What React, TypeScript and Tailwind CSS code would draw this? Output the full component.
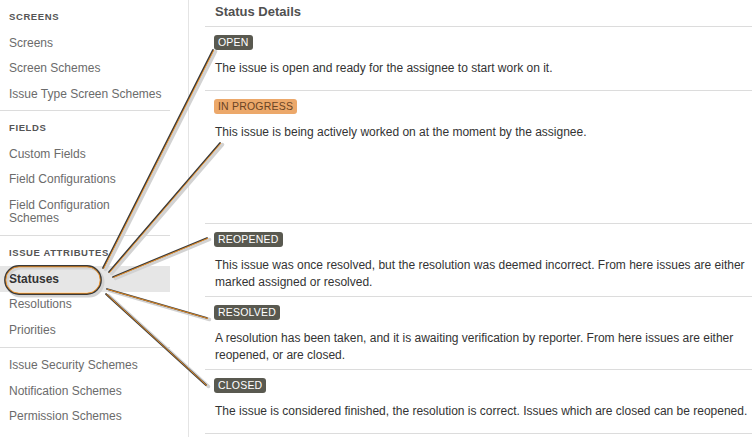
import React from "react";

const font = { fontFamily: '"Liberation Sans", Arial, sans-serif' };

type Item = { label: string; active?: boolean; twoLine?: boolean };
type Section = { heading?: string; items: Item[] };

const sections: Section[] = [
  { heading: "SCREENS", items: [{ label: "Screens" }, { label: "Screen Schemes" }, { label: "Issue Type Screen Schemes" }] },
  {
    heading: "FIELDS",
    items: [{ label: "Custom Fields" }, { label: "Field Configurations" }, { label: "Field Configuration Schemes", twoLine: true }],
  },
  { heading: "ISSUE ATTRIBUTES", items: [{ label: "Statuses", active: true }, { label: "Resolutions" }, { label: "Priorities" }] },
  { items: [{ label: "Issue Security Schemes" }, { label: "Notification Schemes" }, { label: "Permission Schemes" }] },
];

type Status = { name: string; orange?: boolean; text: string; h: string };
const statuses: Status[] = [
  { name: "OPEN", text: "The issue is open and ready for the assignee to start work on it.", h: "h-[64px]" },
  { name: "IN PROGRESS", orange: true, text: "This issue is being actively worked on at the moment by the assignee.", h: "h-[133px]" },
  {
    name: "REOPENED",
    text: "This issue was once resolved, but the resolution was deemed incorrect. From here issues are either marked assigned or resolved.",
    h: "h-[73px]",
  },
  {
    name: "RESOLVED",
    text: "A resolution has been taken, and it is awaiting verification by reporter. From here issues are either reopened, or are closed.",
    h: "h-[73px]",
  },
  {
    name: "CLOSED",
    text: "The issue is considered finished, the resolution is correct. Issues which are closed can be reopened.",
    h: "h-[64px]",
  },
];

function Line({ x1, y1, x2, y2 }: { x1: number; y1: number; x2: number; y2: number }) {
  return (
    <g>
      <line x1={x1 + 2.5} y1={y1 + 1.5} x2={x2 + 2.5} y2={y2 + 1.5} stroke="#d2d2d2" strokeWidth={3.5} strokeLinecap="round" />
      <line x1={x1} y1={y1} x2={x2} y2={y2} stroke="#3a3a3a" strokeWidth={1.8} strokeLinecap="round" />
      <line x1={x1 + 0.7} y1={y1 + 0.4} x2={x2 + 0.7} y2={y2 + 0.4} stroke="#f0901f" strokeWidth={0.9} strokeLinecap="round" />
    </g>
  );
}

export default function App() {
  return (
    <div className="relative w-[752px] h-[437px] bg-white overflow-hidden flex" style={font}>
      {/* Sidebar */}
      <div className="w-[189px] shrink-0 border-r border-[#e4e4e4] pr-[18px]">
        {sections.map((s, i) => (
          <div
            key={i}
            className={`pt-[5px] ${i === 0 ? "pb-[3.5px]" : "pb-[4px]"} ${
              i < sections.length - 1 ? "border-b border-[#dcdcdc]" : ""
            }`}
          >
            {s.heading && (
              <div className="h-[25px] flex items-center pl-[9px] text-[9.5px] font-bold tracking-[0.6px] text-[#555]">
                {s.heading}
              </div>
            )}
            {s.items.map((it) => (
              <div
                key={it.label}
                className={`flex items-center pl-[9px] text-[12px] ${
                  it.twoLine ? "h-[39px] leading-[13px] pr-[20px]" : "h-[25.5px]"
                } ${it.active ? "bg-[#e6e6e6] font-bold text-[#333]" : "text-[#6b6b6b]"}`}
              >
                {it.label}
              </div>
            ))}
          </div>
        ))}
      </div>

      {/* Main */}
      <div className="flex-1 ml-[16px]">
        <div className="h-[27px] border-b border-[#dcdcdc] pl-[10px] pt-[4px] text-[13px] leading-[16px] font-bold text-[#505050]">
          Status Details
        </div>
        {statuses.map((s) => (
          <div key={s.name} className={`${s.h} border-b border-[#dcdcdc] pl-[9px] pt-[8px] pr-[4px]`}>
            <div className="flex">
              <span
                className={`flex items-center h-[15px] px-[4px] rounded-[3px] text-[10.5px] leading-[15px] tracking-[0.2px] ${
                  s.orange ? "bg-[#eca86a] text-[#6a4424]" : "bg-[#595950] text-white"
                }`}
              >
                {s.name}
              </span>
            </div>
            <div className="mt-[10px] text-[12px] leading-[17px] text-[#333] pl-[1px]">{s.text}</div>
          </div>
        ))}
      </div>

      {/* Annotation overlay */}
      <svg className="absolute inset-0 pointer-events-none" width={752} height={437}>
        <rect x={7} y={268} width={96} height={28} rx={14} fill="none" stroke="#d2d2d2" strokeWidth={3} />
        <rect x={5} y={266} width={96} height={28} rx={14} fill="none" stroke="#3a3a3a" strokeWidth={1.8} />
        <rect x={5.8} y={266.8} width={94.4} height={26.4} rx={13} fill="none" stroke="#f0901f" strokeWidth={0.9} />
        <Line x1={103} y1={268} x2={213} y2={50} />
        <Line x1={109} y1={272} x2={220} y2={143} />
        <Line x1={113} y1={277} x2={207} y2={238} />
        <Line x1={107} y1={289} x2={207} y2={318} />
        <Line x1={106} y1={294} x2={206} y2={385} />
      </svg>
    </div>
  );
}
